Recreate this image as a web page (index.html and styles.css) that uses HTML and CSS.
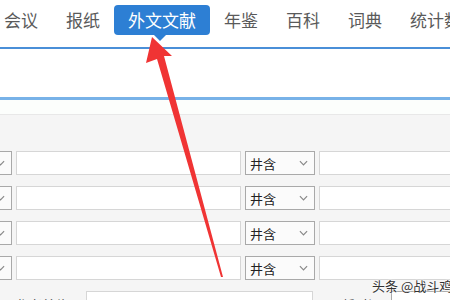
FILE: index.html
```html
<!DOCTYPE html>
<html lang="zh-CN">
<head>
  <meta charset="UTF-8">
  <title>高级检索</title>
  <link rel="stylesheet" href="styles.css">
</head>
<body>
  <div class="page">
    <div class="tabs">
      <span class="tab">会议</span>
      <span class="tab">报纸</span>
      <span class="tab active">外文文献</span>
      <span class="tab">年鉴</span>
      <span class="tab">百科</span>
      <span class="tab">词典</span>
      <span class="tab">统计数据</span>
    </div>

    <div class="search-box"></div>
    <div class="search-under"></div>

    <div class="panel">
      <div class="row">
        <div class="select wide"><span></span><svg class="chev" viewBox="0 0 10 6"><path d="M1 1l4 4 4-4"/></svg></div>
        <div class="input main"></div>
        <div class="select"><span>井含</span><svg class="chev" viewBox="0 0 10 6"><path d="M1 1l4 4 4-4"/></svg></div>
        <div class="input"></div>
      </div>
      <div class="row">
        <div class="select wide"><span></span><svg class="chev" viewBox="0 0 10 6"><path d="M1 1l4 4 4-4"/></svg></div>
        <div class="input main"></div>
        <div class="select"><span>井含</span><svg class="chev" viewBox="0 0 10 6"><path d="M1 1l4 4 4-4"/></svg></div>
        <div class="input"></div>
      </div>
      <div class="row">
        <div class="select wide"><span></span><svg class="chev" viewBox="0 0 10 6"><path d="M1 1l4 4 4-4"/></svg></div>
        <div class="input main"></div>
        <div class="select"><span>井含</span><svg class="chev" viewBox="0 0 10 6"><path d="M1 1l4 4 4-4"/></svg></div>
        <div class="input"></div>
      </div>
      <div class="row">
        <div class="select wide"><span></span><svg class="chev" viewBox="0 0 10 6"><path d="M1 1l4 4 4-4"/></svg></div>
        <div class="input main"></div>
        <div class="select"><span>井含</span><svg class="chev" viewBox="0 0 10 6"><path d="M1 1l4 4 4-4"/></svg></div>
        <div class="input"></div>
      </div>
      <div class="row bottom">
        <span class="label lead">作者</span>
        <span class="label">作者单位</span>
        <div class="input author"></div>
        <span class="label time">更新时间</span>
        <div class="input date"></div>
      </div>
    </div>
  </div>

  <!-- 标注箭头 -->
  <svg class="arrow" width="450" height="300" viewBox="0 0 450 300">
    <polygon points="152,37 172,56 164,56 223,277 221,277 157,59 146,63" fill="#f03434"/>
  </svg>

  <div class="watermark">头条 @战斗鸡</div>
</body>
</html>
```

FILE: styles.css
```css
body {
  margin: 0;
  width: 450px;
  height: 300px;
  overflow: hidden;
  position: relative;
  font-family: "Noto Sans CJK SC", "Noto Sans", sans-serif;
  background: #fff;
}
.page {
  width: 450px;
}
.tabs {
  display: flex;
  margin-left: -10px;
  height: 47px;
  border-bottom: 2px solid #4a8fd8;
  white-space: nowrap;
}
.tab {
  position: relative;
  flex: none;
  height: 30px;
  line-height: 30px;
  margin-top: 5px;
  padding: 0 14px;
  font-size: 17px;
  color: #5a5a5a;
}
.tab.active {
  background: #2d7fd4;
  color: #fff;
  border-radius: 4px;
}
.tab.active::after {
  content: "";
  position: absolute;
  left: 40px;
  bottom: -6px;
  border-left: 6px solid transparent;
  border-right: 6px solid transparent;
  border-top: 6px solid #2d7fd4;
}
.search-box {
  height: 48px;
  background: #fff;
  border-bottom: 3px solid #78b2e8;
}
.search-under {
  height: 14px;
  background: #fcfefc;
  border-bottom: 1px solid #e8e8e8;
}
.panel {
  background: #f5f5f5;
  height: 200px;
  margin-left: -38px;
  padding-top: 36px;
}
.row {
  display: flex;
  gap: 4px;
  height: 24px;
  margin-bottom: 11px;
}
.select {
  flex: none;
  width: 58px;
  height: 22px;
  border: 1px solid #a9a9a9;
  background: #fbfbfb;
  display: flex;
  align-items: center;
  justify-content: space-between;
  padding: 0 6px 0 4px;
  font-size: 13px;
  color: #222;
}
.select.wide {
  width: 38px;
}
.chev {
  width: 9px;
  height: 6px;
  fill: none;
  stroke: #888;
  stroke-width: 1.3;
}
.input {
  flex: none;
  width: 200px;
  height: 22px;
  border: 1px solid #d6d6d6;
  background: #fff;
}
.input.main {
  width: 223px;
}
.row.bottom {
  margin-top: 1px;
  align-items: flex-start;
}
.label {
  font-size: 13px;
  color: #444;
  line-height: 16px;
  padding-top: 6px;
  white-space: nowrap;
}
.label.lead {
  width: 38px;
  margin-right: 24px;
  color: #666;
}
.input.author {
  width: 225px;
  margin-left: 14px;
}
.label.time {
  margin-left: 12px;
  width: 60px;
}
.input.date {
  width: 60px;
  margin-left: 6px;
  border-color: #aaa;
}
.arrow {
  position: absolute;
  left: 0;
  top: 0;
}
.watermark {
  position: absolute;
  left: 372px;
  top: 276px;
  font-size: 13px;
  color: #333;
  white-space: nowrap;
  text-shadow: 0 0 2px #fff, 0 0 2px #fff;
}
```
